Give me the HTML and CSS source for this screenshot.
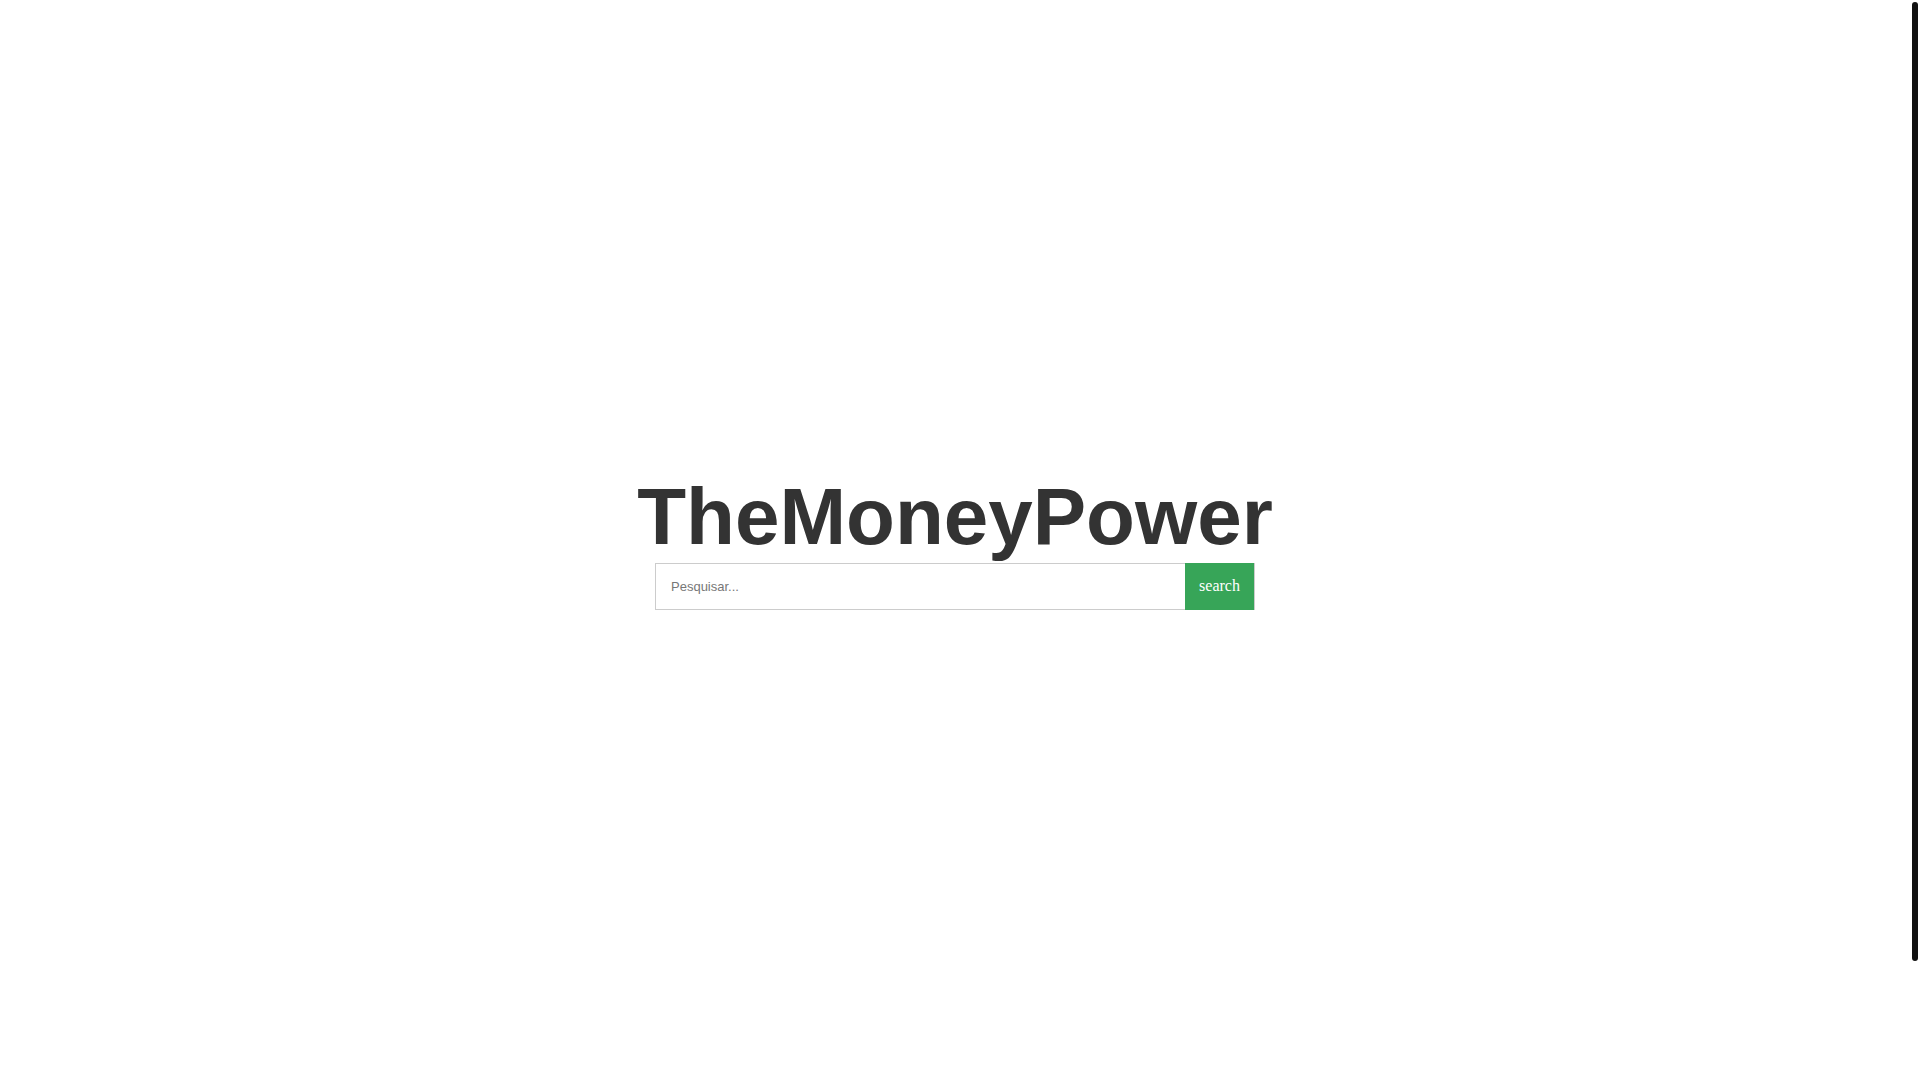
FILE: index.html
```html
<!DOCTYPE html>
<html lang="pt">
<head>
<meta charset="utf-8">
<title>TheMoneyPower</title>
<link rel="stylesheet" href="styles.css">
</head>
<body>
<main class="hero">
  <h1 class="brand">TheMoneyPower</h1>
  <form class="search">
    <input class="search-input" type="text" placeholder="Pesquisar...">
    <button class="search-btn" type="button">search</button>
  </form>
</main>
<div class="scroll-thumb" aria-hidden="true"></div>
</body>
</html>
```

FILE: styles.css
```css
html, body {
  overflow: hidden;
}
body {
  margin: 0;
  background: #fff;
  font-family: "Liberation Sans", Arial, sans-serif;
}
.hero {
  height: 100vh;
  margin-right: 10px;
  display: flex;
  flex-direction: column;
  align-items: center;
  justify-content: center;
}
.brand {
  margin: 0;
  font-size: 80px;
  font-weight: bold;
  color: #333;
  line-height: normal;
}
.search {
  display: flex;
  width: 600px;
  height: 47px;
  margin: 0;
}
.search-input {
  flex: 1;
  box-sizing: border-box;
  height: 47px;
  margin: 0;
  border: 1px solid #ccc;
  border-right: none;
  padding: 0 15px;
  font-family: "Liberation Sans", Arial, sans-serif;
  font-size: 13px;
  color: #555;
  outline: none;
}
.search-input::placeholder {
  color: #777;
}
.search-btn {
  width: 70px;
  height: 47px;
  margin: 0;
  box-sizing: border-box;
  border: none;
  border-right: 1px solid #ccc;
  background: #37a558;
  color: #fff;
  font-family: "Liberation Serif", "Times New Roman", serif;
  font-size: 16px;
  padding: 0;
}
.scroll-thumb {
  position: fixed;
  top: 2px;
  right: 2px;
  width: 6px;
  height: 959px;
  background: #111;
  border-radius: 3px;
}
```
